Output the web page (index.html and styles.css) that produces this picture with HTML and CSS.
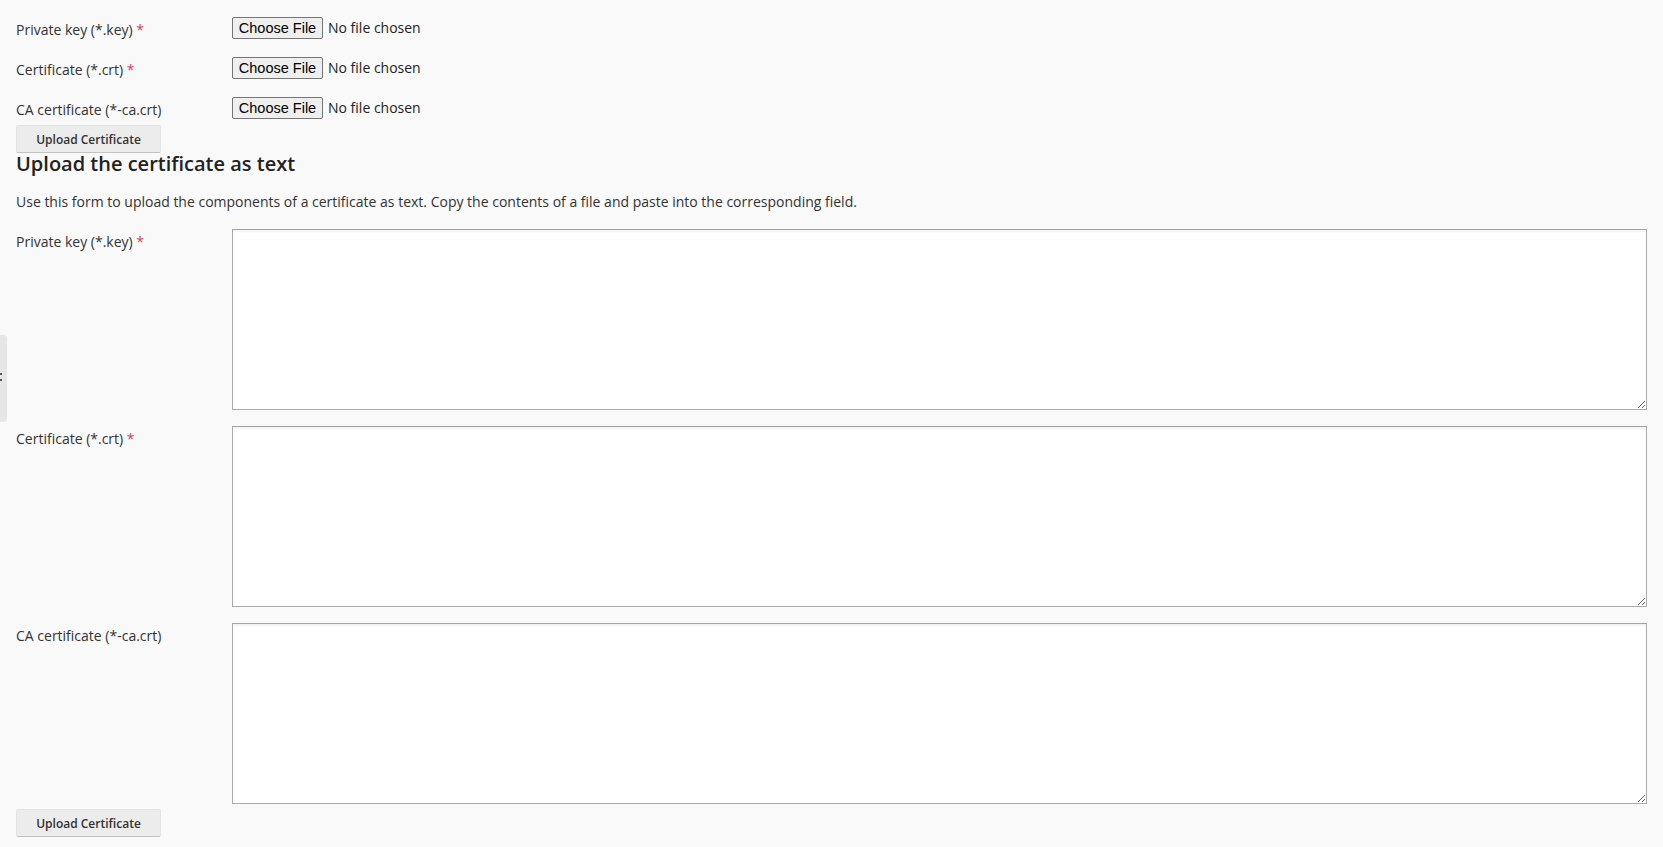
FILE: index.html
```html
<!DOCTYPE html>
<html lang="en">
<head>
  <meta charset="UTF-8">
  <title>Upload Certificate</title>
  <meta name="viewport" content="width=device-width, initial-scale=1.0">
  <link rel="stylesheet" href="styles.css">
</head>
<body>

  <!-- sidebar toggle handle -->
  <div class="side-handle"><span class="grip"></span></div>

  <main class="page">
    <form class="file-form">
      <div class="file-row">
        <label class="field-label" for="keyFile">Private key (*.key) <span class="req">*</span></label>
        <input type="file" id="keyFile" class="file-input">
      </div>
      <div class="file-row">
        <label class="field-label" for="crtFile">Certificate (*.crt) <span class="req">*</span></label>
        <input type="file" id="crtFile" class="file-input">
      </div>
      <div class="file-row">
        <label class="field-label" for="caFile">CA certificate (*-ca.crt)</label>
        <input type="file" id="caFile" class="file-input">
      </div>
      <button type="button" class="btn-upload">Upload Certificate</button>
    </form>

    <h2 class="section-title">Upload the certificate as text</h2>
    <p class="section-desc">Use this form to upload the components of a certificate as text. Copy the contents of a file and paste into the corresponding field.</p>

    <form class="text-form">
      <div class="text-row">
        <label class="field-label" for="keyText">Private key (*.key) <span class="req">*</span></label>
        <textarea id="keyText" class="cert-text"></textarea>
      </div>
      <div class="text-row">
        <label class="field-label" for="crtText">Certificate (*.crt) <span class="req">*</span></label>
        <textarea id="crtText" class="cert-text"></textarea>
      </div>
      <div class="text-row">
        <label class="field-label" for="caText">CA certificate (*-ca.crt)</label>
        <textarea id="caText" class="cert-text"></textarea>
      </div>
      <button type="button" class="btn-upload">Upload Certificate</button>
    </form>
  </main>

</body>
</html>
```

FILE: styles.css
```css
html, body {
  margin: 0; padding: 0;
  background: #f9f9f9;
  height: 100%;
  overflow: hidden;
  font-family: "Open Sans", "Liberation Sans", sans-serif;
  font-size: 14px;
  color: #333;
}
.page {
  padding: 9px 16px 0 16px;
}
.field-label {
  flex: 0 0 216px;
  width: 216px;
  line-height: 18px;
}
.req {
  color: #d4405f;
}

/* file upload block */
.file-form {
  display: flex;
  flex-direction: column;
  align-items: flex-start;
}
.file-row {
  display: flex;
  align-items: flex-start;
  padding-top: 8px;
  height: 32px;
}
.file-row .field-label {
  padding-top: 4px;
}
.file-row:nth-child(3) {
  height: 28px;
}
.file-input {
  font-family: "Open Sans", "Liberation Sans", sans-serif;
  font-size: 14px;
  color: #222;
  line-height: 22px;
  height: 22px;
}
.file-input::file-selector-button {
  box-sizing: border-box;
  width: 91px;
  height: 22px;
  margin: 0 5px 0 0;
  padding: 0;
  font: 400 14.5px/20px "Liberation Sans", Arial, sans-serif;
  color: #000;
  background: #efefef;
  border: 1px solid #767676;
  border-radius: 2px;
}
.btn-upload {
  box-sizing: border-box;
  width: 145px;
  height: 28px;
  padding: 0;
  font-family: "Open Sans", "Liberation Sans", sans-serif;
  font-size: 12px;
  font-weight: 600;
  color: #333;
  background: #ececec;
  border: 1px solid #e3e3e3;
  border-bottom-color: #c2c2c2;
  border-radius: 2px;
  cursor: pointer;
}

/* text upload block */
.section-title {
  margin: 0;
  font-size: 20px;
  font-weight: 600;
  line-height: 22px;
  color: #222;
}
.section-desc {
  margin: 18px 0 0 0;
  line-height: 18px;
}
.text-form {
  margin-top: 18px;
  display: flex;
  flex-direction: column;
  align-items: flex-start;
  gap: 16px;
}
.text-row {
  display: flex;
  align-items: flex-start;
  width: 100%;
}
.text-row .field-label {
  padding-top: 4px;
}
.cert-text {
  flex: 1;
  box-sizing: border-box;
  height: 181px;
  margin: 0;
  background: #fff;
  border: 1px solid #ababab;
  border-top-color: #a3a3a3;
  border-radius: 0;
  box-shadow: inset 0 2px 2px rgba(0, 0, 0, 0.05);
  font-family: "Liberation Mono", monospace;
  font-size: 13px;
}
.text-form .btn-upload {
  margin-top: -11px;
}

/* collapsed sidebar handle */
.side-handle {
  position: fixed;
  top: 335px; left: 0;
  width: 7px; height: 87px;
  background: #e6e6e6;
  border-radius: 0 4px 4px 0;
}
.side-handle .grip {
  position: absolute;
  top: 38px; left: 0;
  width: 2px; height: 2px;
  background: #555;
  box-shadow: 0 6px 0 #555;
}
```
